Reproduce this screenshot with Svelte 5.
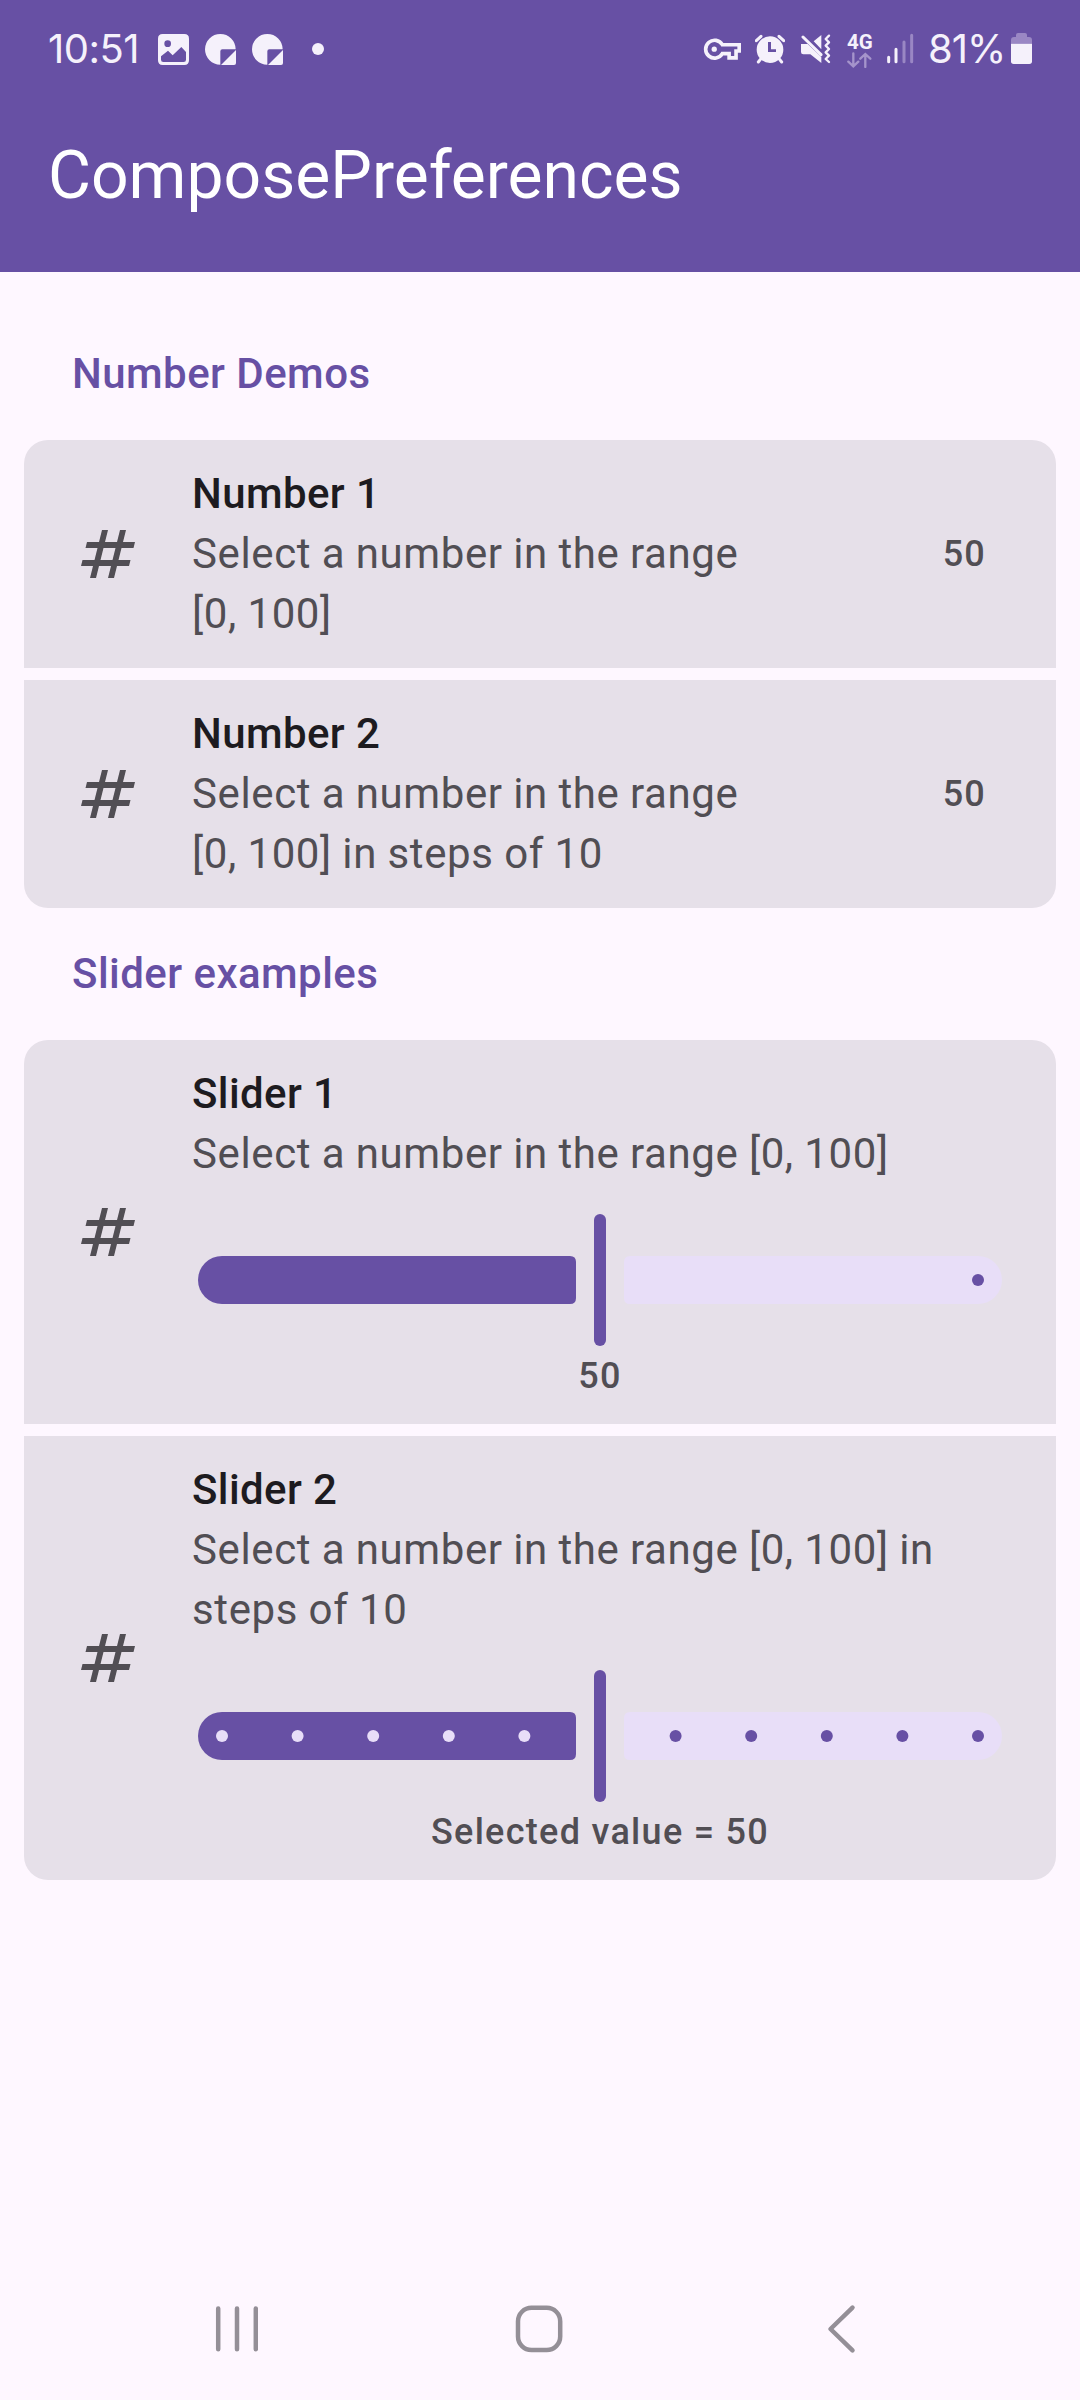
<script>
  const numbers = [
    { title: 'Number 1', text: 'Select a number in the range [0, 100]', value: '50' },
    { title: 'Number 2', text: 'Select a number in the range [0, 100] in steps of 10', value: '50' }
  ];
  const sliders = [
    { title: 'Slider 1', text: 'Select a number in the range [0, 100]', label: '50', before: [], after: [100] },
    {
      title: 'Slider 2',
      text: 'Select a number in the range [0, 100] in steps of 10',
      label: 'Selected value = 50',
      before: [0, 10, 20, 30, 40],
      after: [60, 70, 80, 90, 100]
    }
  ];
  // Ticks run from 24px inside the track start, 7.56px per unit of value.
  const tickX = (v) => 24 + v * 7.56;
</script>

{#snippet hash()}
  <svg class="hash" viewBox="0 0 24 24"><path d="M20.5 10 21 8h-4l1-4h-2l-1 4h-4l1-4h-2L9 8H5l-.5 2h4l-1 4h-4L3 16h4l-1 4h2l1-4h4l-1 4h2l1-4h4l.5-2h-4l1-4zm-7 4h-4l1-4h4z" /></svg>
{/snippet}

{#snippet sticker()}
  <svg class="sticker" viewBox="0 0 93 120">
    <path d="M46 12A46 46 0 0 0 0 58A46 46 0 0 0 46 104V64Q46 58 52 58H92A46 46 0 0 0 46 12Z" />
    <path d="M93 60V99Q93 105 87 105H48Z" />
  </svg>
{/snippet}

<div class="screen">
  <header>
    <div class="status">
      <span class="time">10:51</span>
      <svg class="image" viewBox="384 60 93 120">
        <path fill-rule="evenodd" d="M398 72H463Q477 72 477 86V151Q477 165 463 165H398Q384 165 384 151V86Q384 72 398 72ZM413 91A10 10 0 1 0 413 111A10 10 0 1 0 413 91ZM393 139V149Q393 156 400 156H461Q468 156 468 149V126L454 111L428 136L414 122Z" />
      </svg>
      {@render sticker()}
      {@render sticker()}
      <span class="more"></span>
      <span class="grow"></span>
      <svg class="key" viewBox="40 60 112 120">
        <path class="outline" d="M95.400 104H146.500V123H137V144H116V131H95.400A27 27 0 1 1 95.400 104Z" />
        <circle cx="71" cy="117.500" r="8" />
      </svg>
      <svg class="alarm" viewBox="194 60 90 120">
        <path fill-rule="evenodd" d="M239 79A40 40 0 1 0 239 159A40 40 0 1 0 239 79ZM233 96H242V118L257 118V126H233Z" />
        <path class="line" d="M198 92 212 79M280 92 266 79M212 146 204 156M266 146 274 156" />
      </svg>
      <svg class="mute" viewBox="330 60 90 120">
        <path d="M331 102H350L391 141V159L358 133H337Q330 133 330 126V102ZM391 75V118L368 94Z" />
        <path class="line" d="M336 81 390 134" />
        <path class="wave" d="M414 77 404 87 414 97 404 107 414 117 404 127 414 137 404 147 414 156" />
      </svg>
      <span class="net">
        <span class="gen">4G</span>
        <svg viewBox="471 120 76 48"><path d="M490 124V162M475 149 490 163 505 149M526 165V127M511 140 526 126 541 140" /></svg>
      </span>
      <svg class="signal" viewBox="586 60 84 120">
        <path d="M594 142V155M616 118V155" />
        <path class="dim" d="M640 96V155M663 76V155" />
      </svg>
      <span class="percent">81%</span>
      <svg class="battery" viewBox="963 60 63 120">
        <path class="dim" d="M963 101V90Q963 81 972 81H978V75Q978 69 984 69H1005Q1011 69 1011 75V81H1017Q1026 81 1026 90V101Z" />
        <path d="M963 101H1026V154Q1026 162 1018 162H971Q963 162 963 154Z" />
      </svg>
    </div>
    <h1>ComposePreferences</h1>
  </header>

  <main>
    <h2>Number Demos</h2>
    <section>
      {#each numbers as n}
        <div class="card">
          {@render hash()}
          <div class="body">
            <h3>{n.title}</h3>
            <p>{n.text}</p>
          </div>
          <span class="value">{n.value}</span>
        </div>
      {/each}
    </section>

    <h2>Slider examples</h2>
    <section>
      {#each sliders as s}
        <div class="card">
          {@render hash()}
          <div class="body">
            <h3>{s.title}</h3>
            <p>{s.text}</p>
            <svg class="slider" viewBox="0 0 804 144">
              <path class="active" d="M24 48H372Q378 48 378 54V90Q378 96 372 96H24A24 24 0 0 1 24 48Z" />
              <path class="inactive" d="M432 48H780A24 24 0 0 1 780 96H432Q426 96 426 90V54Q426 48 432 48Z" />
              <rect class="active" x="396" y="6" width="12" height="132" rx="6" />
              {#each s.before as v}<circle class="inactive" cx={tickX(v)} cy="72" r="6" />{/each}
              {#each s.after as v}<circle class="active" cx={tickX(v)} cy="72" r="6" />{/each}
            </svg>
            <span class="label">{s.label}</span>
          </div>
        </div>
      {/each}
    </section>
  </main>

  <nav>
    <svg class="recents" viewBox="0 0 44 50"><path d="M4.200 4.500V45.200M23 4.500V45.200M41.800 4.500V45.200" /></svg>
    <svg class="home" viewBox="0 0 50 50"><rect x="4" y="3.800" width="42.200" height="42.200" rx="13.500" /></svg>
    <svg class="back" viewBox="0 0 30 50"><path d="M26.500 3.600 4.500 25 26.500 46.400" /></svg>
  </nav>
</div>

<style>
  :global(body) {
    margin: 0;
    background: #fef7ff;
  }
  .screen {
    width: 1080px;
    height: 2400px;
    display: flex;
    flex-direction: column;
    background: #fef7ff;
    font-family: Roboto, sans-serif;
  }
  svg {
    display: block;
    flex: none;
  }
  h1, h2, h3, p {
    margin: 0;
  }
  header {
    height: 272px;
    background: #6750a4;
    color: #fff;
  }
  .status {
    display: flex;
    align-items: center;
    height: 40px;
    padding: 30px 48px 22px;
    color: #f5f1fb;
    fill: #f5f1fb;
    font-family: Inter, sans-serif;
  }
  .status > svg {
    height: 40px;
  }
  .time {
    width: 110px;
    font-size: 40px;
    line-height: 38px;
    letter-spacing: -0.500px;
    margin-top: -2px;
  }
  .image {
    width: 31px;
  }
  .sticker {
    width: 31px;
    margin-left: 16px;
  }
  .more {
    width: 12px;
    height: 12px;
    margin: -2px 0 0 29px;
    border-radius: 50%;
    background: #f5f1fb;
  }
  .grow {
    flex: 1;
  }
  .key {
    width: 37px;
    overflow: visible;
  }
  .outline {
    fill: none;
    stroke: #f5f1fb;
    stroke-width: 11;
  }
  .alarm {
    width: 30px;
    margin-left: 14px;
  }
  .line {
    fill: none;
    stroke: #f5f1fb;
    stroke-width: 9;
    stroke-linecap: round;
  }
  .mute {
    width: 30px;
    margin-left: 16px;
  }
  .wave {
    fill: none;
    stroke: #f5f1fb;
    stroke-width: 7;
    stroke-linejoin: round;
    stroke-linecap: round;
  }
  .net {
    width: 26px;
    margin-left: 16px;
    display: flex;
    flex-direction: column;
  }
  .gen {
    font: 700 20.500px/20px Roboto, sans-serif;
    white-space: nowrap;
  }
  .net svg {
    width: 25.300px;
    height: 16px;
    fill: none;
    stroke: #a594cb;
    stroke-width: 7;
    stroke-linecap: round;
  }
  .signal {
    width: 28px;
    margin-left: 13px;
    fill: none;
    stroke: #f5f1fb;
    stroke-width: 9;
    stroke-linecap: round;
  }
  .signal .dim {
    stroke: #9a87c4;
  }
  .percent {
    width: 83px;
    margin: -2px 0 0 14px;
    font-size: 40px;
    line-height: 38px;
    letter-spacing: -1px;
  }
  .battery {
    width: 21px;
  }
  .battery .dim {
    fill: #9a87c4;
  }
  h1 {
    margin: 42px 0 0 48px;
    font-size: 66px;
    font-weight: 400;
    line-height: 84px;
  }
  main {
    flex: 1;
    padding: 36px 24px 0;
  }
  h2 {
    padding: 36px 48px;
    color: #6750a4;
    font-size: 42px;
    font-weight: 500;
    line-height: 60px;
    letter-spacing: 0.450px;
  }
  section {
    display: flex;
    flex-direction: column;
    gap: 12px;
    border-radius: 24px;
    overflow: hidden;
  }
  .card {
    display: flex;
    align-items: center;
    padding: 24px 48px;
    background: #e6e0e9;
    color: #514e54;
  }
  .hash {
    width: 72px;
    height: 72px;
    margin: 0 48px 0 0;
    fill: currentColor;
  }
  .body {
    flex: 1;
    display: flex;
    flex-direction: column;
  }
  h3 {
    color: #1d1b20;
    font-size: 42px;
    font-weight: 500;
    line-height: 60px;
    letter-spacing: 0.400px;
  }
  p {
    font-size: 42px;
    line-height: 60px;
    letter-spacing: 0.620px;
    word-spacing: -0.500px;
  }
  .value {
    width: 194px;
    padding-right: 22px;
    font-size: 36px;
    font-weight: 500;
    line-height: 48px;
    letter-spacing: 1.200px;
    text-align: right;
  }
  .slider {
    width: 804px;
    height: 144px;
    margin: 24px 0 0 6px;
  }
  .active {
    fill: #6750a4;
  }
  .inactive {
    fill: #e8def8;
  }
  .label {
    font-size: 36px;
    font-weight: 500;
    line-height: 48px;
    letter-spacing: 1.300px;
    text-align: center;
  }
  nav {
    display: flex;
    align-items: center;
    height: 142px;
    padding-left: 214px;
    fill: none;
    stroke: #948f97;
    stroke-width: 4.500;
    stroke-linecap: round;
    stroke-linejoin: round;
  }
  .recents {
    width: 44px;
    height: 50px;
  }
  .home {
    width: 50px;
    height: 50px;
    margin-left: 256px;
  }
  .back {
    width: 30px;
    height: 50px;
    margin-left: 262px;
  }
</style>
